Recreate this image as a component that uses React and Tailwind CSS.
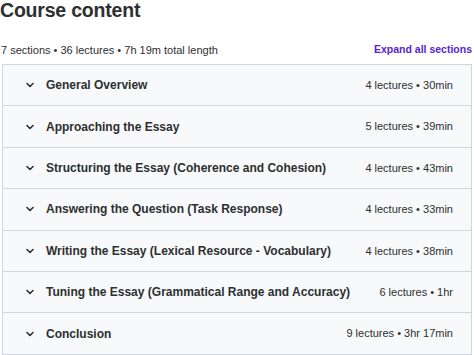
import React from 'react';

const sections = [
    { title: 'General Overview', meta: '4 lectures • 30min' },
    { title: 'Approaching the Essay', meta: '5 lectures • 39min' },
    { title: 'Structuring the Essay (Coherence and Cohesion)', meta: '4 lectures • 43min' },
    { title: 'Answering the Question (Task Response)', meta: '4 lectures • 33min' },
    { title: 'Writing the Essay (Lexical Resource - Vocabulary)', meta: '4 lectures • 38min' },
    { title: 'Tuning the Essay (Grammatical Range and Accuracy)', meta: '6 lectures • 1hr' },
    { title: 'Conclusion', meta: '9 lectures • 3hr 17min' },
];

const Chevron = () => (
    <svg width="8" height="6" viewBox="0 0 8 6" fill="none" stroke="#2d2f31" strokeWidth="1.6" strokeLinecap="round" strokeLinejoin="round">
        <path d="M1 1.5l3 3 3-3" />
    </svg>
);

const App = () => {
    return (
        <div className="w-[474px] h-[355px] overflow-hidden bg-white text-[#2d2f31] font-['Liberation_Sans',Arial,sans-serif]">
            <h2 className="text-[19.5px] font-bold leading-none pt-[1px] tracking-[-0.2px]">Course content</h2>
            <div className="flex justify-between items-end mt-[21px] pl-[1px] pr-[2px]">
                <span className="text-[11px]">7 sections • 36 lectures • 7h 19m total length</span>
                <button className="text-[10.5px] font-bold text-[#5624d0]">Expand all sections</button>
            </div>
            <div className="mt-[6px] ml-[2px] mr-[2px] border border-[#d1d7dc]">
                {sections.map((s) => (
                    <div key={s.title} className="h-[41.4px] flex items-center bg-[#f7f9fa] border-b border-[#d1d7dc] pl-[23px] pr-[18px]">
                        <Chevron />
                        <span className="ml-[12px] text-[12px] font-bold flex-1">{s.title}</span>
                        <span className="text-[11px]">{s.meta}</span>
                    </div>
                ))}
            </div>
        </div>
    );
};

export default App;
